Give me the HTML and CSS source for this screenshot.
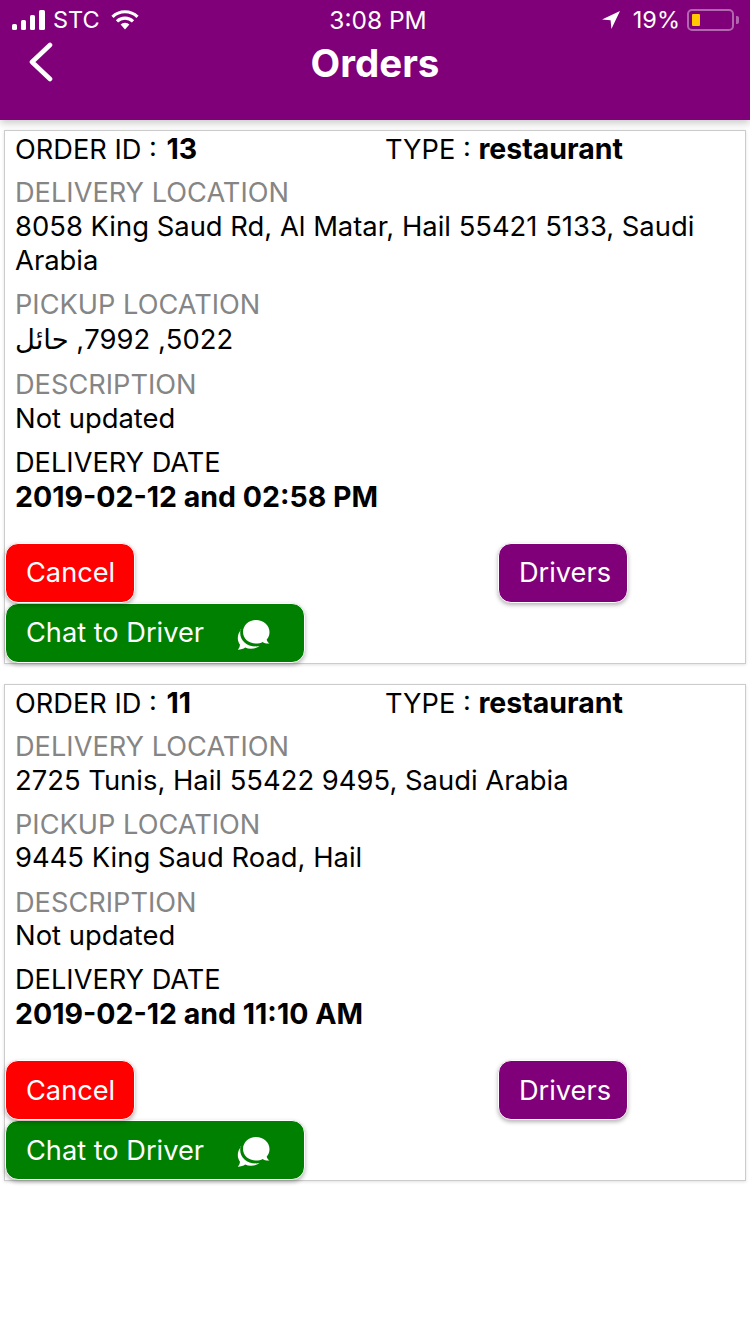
FILE: index.html
```html
<!DOCTYPE html>
<html lang="en">
  <head>
    <meta charset="UTF-8">
    <meta name="viewport" content="width=device-width, initial-scale=1.0">
    <title>Orders</title>
    <link rel="stylesheet" href="styles.css">
  </head>
  <body>
    <header class="app-header">
      <div class="status-bar">
        <div class="status-left">
          <svg class="signal-icon" width="34" height="20" viewBox="0 0 34 20">
            <rect x="0" y="14" width="5" height="6" rx="1.5" fill="#fff"/>
            <rect x="9" y="10" width="5" height="10" rx="1.5" fill="#fff"/>
            <rect x="18" y="5" width="5" height="15" rx="1.5" fill="#fff"/>
            <rect x="27" y="0" width="6" height="20" rx="1.5" fill="#fff"/>
          </svg>
          <span>STC</span>
          <svg class="wifi-icon" width="28" height="20" viewBox="0 0 28 20">
            <path d="M1.500 6.800a18 18 0 0 1 25 0" fill="none" stroke="#fff" stroke-width="3.200"/>
            <path d="M6 11.300a11.600 11.600 0 0 1 16 0" fill="none" stroke="#fff" stroke-width="3.200"/>
            <path d="M9.600 14.600a6 6 0 0 1 8.800 0L14 19.600z" fill="#fff"/>
          </svg>
        </div>
        <div class="status-time">3:08 PM</div>
        <div class="status-right">
          <svg class="location-icon" width="20" height="20" viewBox="0 0 20 20">
            <path d="M19 1 1 9.600l8.600.6.800 8.800z" fill="#fff"/>
          </svg>
          <span>19%</span>
          <div class="battery">
            <div class="battery-body"><div class="battery-level"></div></div>
            <div class="battery-tip"></div>
          </div>
        </div>
      </div>
      <div class="nav-bar">
        <svg class="back-icon" width="26" height="40" viewBox="0 0 26 40">
          <path d="M22 3 4 20l18 17" fill="none" stroke="#fff" stroke-width="4.600" stroke-linecap="round" stroke-linejoin="round"/>
        </svg>
        <h1>Orders</h1>
      </div>
    </header>

    <main class="order-list">
      <section class="order-card">
        <div class="order-head">
          <div class="order-col order-id">ORDER ID : <b>13</b></div>
          <div class="order-col">TYPE : <b>restaurant</b></div>
        </div>
        <div class="field">
          <div class="field-label">DELIVERY LOCATION</div>
          <div class="field-value">8058 King Saud Rd, Al Matar, Hail 55421 5133, Saudi Arabia</div>
        </div>
        <div class="field">
          <div class="field-label">PICKUP LOCATION</div>
          <div class="field-value arabic-line"><span class="rtl-text" dir="rtl">5022, 7992, حائل</span></div>
        </div>
        <div class="field">
          <div class="field-label">DESCRIPTION</div>
          <div class="field-value">Not updated</div>
        </div>
        <div class="field">
          <div>DELIVERY DATE</div>
          <div><b>2019-02-12 and 02:58 PM</b></div>
        </div>
        <div class="order-actions">
          <div class="action-row">
            <button type="button" class="btn btn-cancel">Cancel</button>
            <button type="button" class="btn btn-drivers">Drivers</button>
          </div>
          <button type="button" class="btn btn-chat">Chat to Driver
            <svg class="chat-icon" width="34" height="32" viewBox="0 0 34 32">
              <path d="M19 1C26.500 1 32.500 6 32.500 13c0 3-1 5.500-2.800 7.500.3 1.800 1.300 3 2.800 4-2.500.4-5-.2-6.800-1.500-1.900 1-4.200 1.500-6.700 1.500-7.500 0-13-5-13-11.500S11.500 1 19 1z" fill="#fff"/>
              <path d="M4.300 10.500C2 13 .8 16 .8 19c0 2.600.8 4.800 2.200 6.700-.2 1.900-.8 3.500-2.200 5 3 0 5.600-.8 7.400-2.100 1.700.8 3.700 1.200 5.800 1.200 3.300 0 6.300-1 8.600-2.700-1 .2-2.200.3-3.400.3-9.500 0-16-6-16-13.500 0-1.100.1-2.300.4-3.400z" fill="#fff"/>
            </svg>
          </button>
        </div>
      </section>

      <section class="order-card">
        <div class="order-head">
          <div class="order-col order-id">ORDER ID : <b>11</b></div>
          <div class="order-col">TYPE : <b>restaurant</b></div>
        </div>
        <div class="field">
          <div class="field-label">DELIVERY LOCATION</div>
          <div class="field-value">2725 Tunis, Hail 55422 9495, Saudi Arabia</div>
        </div>
        <div class="field">
          <div class="field-label">PICKUP LOCATION</div>
          <div class="field-value">9445 King Saud Road, Hail</div>
        </div>
        <div class="field">
          <div class="field-label">DESCRIPTION</div>
          <div class="field-value">Not updated</div>
        </div>
        <div class="field">
          <div>DELIVERY DATE</div>
          <div><b>2019-02-12 and 11:10 AM</b></div>
        </div>
        <div class="order-actions">
          <div class="action-row">
            <button type="button" class="btn btn-cancel">Cancel</button>
            <button type="button" class="btn btn-drivers">Drivers</button>
          </div>
          <button type="button" class="btn btn-chat">Chat to Driver
            <svg class="chat-icon" width="34" height="32" viewBox="0 0 34 32">
              <path d="M19 1C26.500 1 32.500 6 32.500 13c0 3-1 5.500-2.800 7.500.3 1.800 1.300 3 2.800 4-2.500.4-5-.2-6.800-1.500-1.900 1-4.200 1.500-6.700 1.500-7.500 0-13-5-13-11.500S11.500 1 19 1z" fill="#fff"/>
              <path d="M4.300 10.500C2 13 .8 16 .8 19c0 2.600.8 4.800 2.200 6.700-.2 1.900-.8 3.500-2.200 5 3 0 5.600-.8 7.400-2.100 1.700.8 3.700 1.200 5.800 1.200 3.300 0 6.300-1 8.600-2.700-1 .2-2.200.3-3.400.3-9.500 0-16-6-16-13.500 0-1.100.1-2.300.4-3.400z" fill="#fff"/>
            </svg>
          </button>
        </div>
      </section>
    </main>
  </body>
</html>
```

FILE: styles.css
```css
body {
  margin: 0;
  background-color: #fff;
  color: #000;
  font-family: Inter, "DejaVu Sans", sans-serif;
  font-size: 27.2px;
  line-height: 33.8px;
}

b {
  font-size: 28.5px;
}

.app-header {
  height: 120px;
  background-color: #7f0078;
  color: #fff;
  box-shadow: 0 3px 8px rgba(0, 0, 0, 0.22);
}

.status-bar {
  display: grid;
  grid-template-columns: 1fr auto 1fr;
  align-items: center;
  height: 40px;
  padding: 0 11px 0 12px;
  font-size: 23.5px;
  line-height: 40px;
}

.status-left,
.status-right {
  display: flex;
  align-items: center;
}

.status-right {
  justify-content: flex-end;
}

.status-time {
  padding-left: 5px;
  font-size: 24.5px;
}

.signal-icon {
  margin-right: 7px;
}

.wifi-icon {
  margin-left: 11px;
}

.location-icon {
  margin-right: 12px;
}

.battery {
  display: flex;
  align-items: center;
  margin-left: 7px;
}

.battery-body {
  width: 47px;
  height: 22px;
  box-sizing: border-box;
  padding: 3px;
  border: 2px solid rgba(255, 255, 255, 0.4);
  border-radius: 5px;
}

.battery-level {
  width: 8px;
  height: 100%;
  background-color: #ffc800;
  border-radius: 1px;
}

.battery-tip {
  width: 3px;
  height: 8px;
  margin-left: 2px;
  background-color: rgba(255, 255, 255, 0.4);
  border-radius: 0 2px 2px 0;
}

.nav-bar {
  position: relative;
  text-align: center;
}

.back-icon {
  position: absolute;
  left: 28px;
  top: 2px;
}

.nav-bar h1 {
  margin: 0;
  font-size: 38.5px;
  line-height: 46px;
  font-weight: 700;
}

.order-list {
  display: flex;
  flex-direction: column;
  gap: 20px;
  padding: 10px 4px;
}

.order-card {
  border: 1px solid #ccc;
  padding-top: 1px;
  box-shadow: 0 1px 3px rgba(0, 0, 0, 0.12);
}

.order-head {
  display: flex;
}

.order-col {
  width: 50%;
  padding-left: 10px;
  box-sizing: border-box;
}

.order-id b {
  margin-left: 2px;
}

.field {
  margin-top: 10.3px;
  padding: 0 10px;
}

.order-head + .field {
  margin-top: 9.2px;
}

.field-label {
  color: #858585;
}

.field-value {
  font-size: 27.4px;
}

.arabic-line {
  height: 36.500px;
  line-height: 36.500px;
}

.rtl-text {
  display: inline-block;
}

.order-actions {
  margin-top: 28px;
}

.action-row {
  display: flex;
}

.btn {
  display: flex;
  align-items: center;
  height: 60px;
  box-sizing: border-box;
  padding: 0 20px;
  border: 1px solid #fff;
  border-radius: 13px;
  color: #fff;
  font-family: inherit;
  font-size: 27.2px;
  box-shadow: 0 2px 4px rgba(0, 0, 0, 0.3);
}

.btn-cancel {
  width: 130px;
  background-color: #f00;
}

.btn-drivers {
  width: 130px;
  margin-left: 363px;
  background-color: #7f0078;
}

.btn-chat {
  width: 300px;
  background-color: #008000;
}

.chat-icon {
  margin-left: 33px;
  margin-top: 4px;
}
```
